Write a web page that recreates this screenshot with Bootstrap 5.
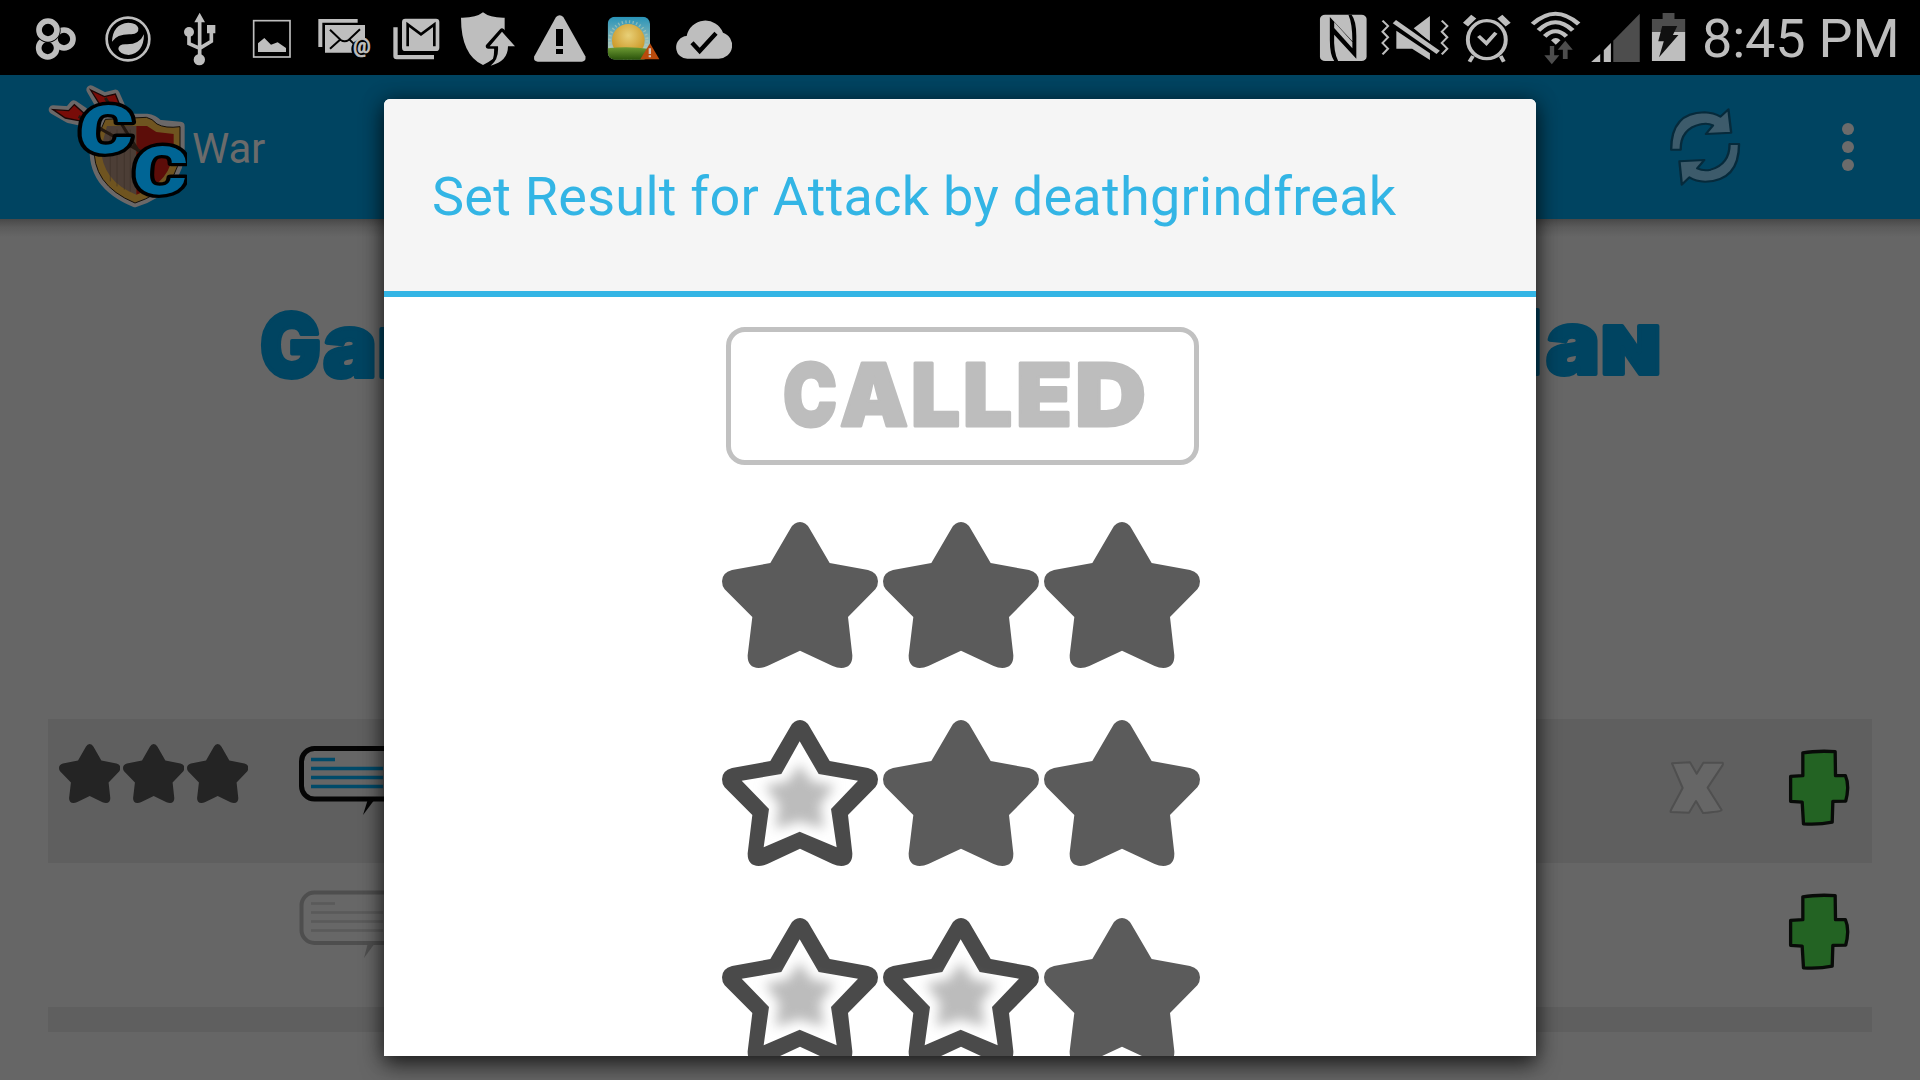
<!DOCTYPE html>
<html lang="en">
<head>
<meta charset="utf-8">
<meta name="viewport" content="width=device-width, initial-scale=1">
<title>War</title>
<link href="https://cdn.jsdelivr.net/npm/bootstrap@5.3.0/dist/css/bootstrap.min.css" rel="stylesheet">
<style>
  body { font-family: Roboto, "Noto Sans", sans-serif; background: #666; width: 1920px; height: 1080px; }
  svg { display: block; flex: none; }
  .status-bar { height: 75px; background: #000; color: #bebebe; z-index: 3; padding-left: 20px; }
  .status-icons svg { fill: #bebebe; }
  .clock { width: 229px; padding-left: 11px; font-size: 54px; line-height: 78px; white-space: nowrap; letter-spacing: -.2px; }
  .action-bar { height: 144px; background: #004461; color: #6b6b6b; padding-left: 47px; }
  .action-title { font-size: 42px; line-height: 48px; margin-left: 5px; padding-top: 3px; letter-spacing: -.2px; }
  .refresh-icon { margin-right: 99px; }
  .overflow-icon { margin-right: 66px; }
  .drop-line { height: 18px; background: linear-gradient(#484848, #5b5b5b 45%, #666); }
  .clan-title { padding: 64px 0 0 250px; height: 482px; }
  .clan-title svg, .called-btn svg { overflow: visible; }
  .display-face { font-family: Inter, "Open Sans", sans-serif; font-weight: 900; }
  .war-list { padding: 0 48px; }
  .war-row { height: 144px; }
  .war-row.shaded { background: #5f5f5f; }
  .war-row.cut { height: 25px; }
  .mini-stars { width: 251px; padding: 24.6px 0 0 10.7px; gap: 2.8px; fill: #242424; }
  .mini-stars svg { width: 61.4px; height: 59px; }
  .row-actions { padding: 28px 20px 0 0; gap: 61px; }
  .clear-icon { margin-top: 13px; }
  .result-dialog { left: 384px; top: 99px; width: 1152px; height: 957px; border-radius: 6px 6px 0 0; background: #fff; box-shadow: 0 9px 22px rgba(0,0,0,.62), 0 0 20px rgba(0,0,0,.35); z-index: 2; }
  .dialog-head { height: 198px; background: #f5f5f5; border-bottom: 6px solid #33b5e5; border-radius: 6px 6px 0 0; padding-left: 48px; }
  .dialog-head h1 { color: #33b5e5; font-size: 54px; font-weight: 400; line-height: 64px; padding-top: 4px; white-space: nowrap; letter-spacing: .26px; }
  .dialog-list { height: 759px; padding-top: 30px; }
  .called-btn { width: 473px; height: 138px; border: 5px solid #c1c1c1; border-radius: 19px; margin: 0 0 57px 5px; background: #fff; }
  .star-row { gap: 5px; margin: 0 0 52px 1px; fill: #5b5b5b; }
  .star-row svg { width: 156px; height: 146px; }
</style>
</head>
<body class="overflow-hidden position-relative">

<svg width="0" height="0" class="position-absolute">
  <defs>
    <filter id="soft" x="-40%" y="-40%" width="180%" height="180%"><feGaussianBlur stdDeviation="17"/></filter>
    <linearGradient id="sky" x1="0" y1="0" x2="0" y2="1"><stop offset="0" stop-color="#2893b8"/><stop offset=".7" stop-color="#a5c4bc"/></linearGradient>
    <radialGradient id="sun" cy=".35" r=".65"><stop offset="0" stop-color="#e8d078"/><stop offset="1" stop-color="#c9921f"/></radialGradient>
    <linearGradient id="grass" x1="0" y1="0" x2="0" y2="1"><stop offset="0" stop-color="#6d9a33"/><stop offset="1" stop-color="#28510a"/></linearGradient>
    <clipPath id="tile"><rect x="683" y="50" width="127" height="129" rx="22"/></clipPath>
    <path id="star-shape" d="M205 20Q216 0 234 0Q252 0 263 20L323 123L438 144Q468 152 468 178Q468 192 460 202L378 285L391 400Q392 437 358 438Q345 438 332 432L234 386L136 432Q123 438 110 438Q76 437 77 400L91 285L8 202Q0 192 0 178Q0 152 30 144L145 123Z"/>
  </defs>
  <symbol id="star" viewBox="0 0 468 438" preserveAspectRatio="none"><use href="#star-shape"/></symbol>
  <symbol id="star-won" viewBox="0 0 468 438" preserveAspectRatio="none">
    <use href="#star-shape" fill="#4a4a4a"/>
    <path fill="#fff" d="M233 64L290 162L408 182L327 267L344 382L233 335L125 382L141 267L59 182L178 162Z"/>
    <path fill="#bcbcbc" filter="url(#soft)" d="M233 132L268 184L338 198L294 255L306 326L233 304L160 326L172 255L128 198L198 184Z"/>
  </symbol>
  <symbol id="plus" viewBox="860 140 200 245">
    <path d="M911 156Q950 149 1009 152L1010 225L1040 225Q1047 240 1047 262Q1046 285 1041 302L1002 303L1000 366Q960 374 913 371L909 305L874 303L874 227L911 225Z" fill="#236323" stroke="#080b08" stroke-width="10" stroke-linejoin="round"/>
  </symbol>
</svg>

<header class="status-bar d-flex position-relative">
  <div class="status-icons d-flex">
    <svg width="72" height="75" viewBox="60 0 216 225"><g fill="none" stroke="#000" stroke-width="24"><circle cx="192" cy="117" r="27"/></g><g fill="none" stroke="#bebebe" stroke-width="17"><circle cx="192" cy="117" r="27"/><circle cx="143" cy="144" r="27"/><circle cx="144" cy="90" r="27" stroke="#000" stroke-width="22"/><circle cx="144" cy="90" r="27"/></g></svg>
    <svg width="72" height="75" viewBox="276 0 216 225"><circle cx="384" cy="117" r="64" fill="none" stroke="#bebebe" stroke-width="8"/><path d="M336 125Q338 72 385 68Q411 69 415 84Q417 101 394 103Q352 101 336 125ZM432 103Q431 160 386 165Q358 162 355 147Q355 133 376 133Q418 135 432 103Z"/></svg>
    <svg width="72" height="75" viewBox="492 0 216 225"><circle cx="598" cy="179" r="17"/><circle cx="567" cy="96" r="15"/><path d="M621 75h25v25h-25zM599 38l16 29h-32z"/><path d="M599 60V175M567 96v35l32 14M634 90v34l-35 21" fill="none" stroke="#bebebe" stroke-width="11"/></svg>
    <svg width="72" height="75" viewBox="708 0 216 225"><rect x="761" y="62" width="109" height="109" fill="none" stroke="#bebebe" stroke-width="5"/><path d="M774 156V130L793 114L813 134L833 127L858 144V156Z"/></svg>
    <svg width="72" height="75" viewBox="924 0 216 225"><path d="M955 57h118v11H967v73h-12zM975 75h120v83H975z"/><path d="M990 89L1022 120Q1034 128 1046 120L1080 88M990 146l30-27M1048 118l12 12" fill="none" stroke="#000" stroke-width="6"/><ellipse cx="1086" cy="147" rx="32" ry="31" fill="#000"/><text x="1086" y="160" text-anchor="middle" font-size="58" font-weight="700" fill="#bebebe" stroke="#bebebe" stroke-width="2">@</text></svg>
    <svg width="72" height="75" viewBox="0 0 216 225"><path d="M40 82h13v83h109v13H50q-10 0-10-10z"/><rect x="66" y="56" width="112" height="97" rx="10"/><path d="M83 139V73l40 30l40-30v66" fill="none" stroke="#000" stroke-width="8"/></svg>
    <svg width="72" height="75" viewBox="216 0 216 225"><path d="M309 37Q330 54 374 53V100Q375 165 309 195Q243 165 243 53Q288 54 309 37Z"/><path d="M366 92L409 139H388Q386 190 334 201Q352 180 349 139H324Z" stroke="#000" stroke-width="14" stroke-linejoin="round"/><path d="M366 95L405 139H384Q384 184 332 197Q357 178 354 139H329Z"/></svg>
    <svg width="72" height="75" viewBox="432 0 216 225"><path d="M528 51Q539 40 550 51L616 169Q620 184 606 185H473Q458 184 463 169Z"/><path fill="#000" d="M528 87h21v51h-21zM528 147h21v15h-21z"/></svg>
    <svg width="72" height="75" viewBox="648 0 216 225"><g clip-path="url(#tile)"><rect x="683" y="50" width="127" height="129" fill="url(#sky)"/><circle cx="745" cy="121" r="56" fill="none" stroke="#b9cdb5" stroke-width="9" stroke-dasharray="4 7" opacity=".6"/><circle cx="745" cy="121" r="49" fill="url(#sun)"/><path d="M683 145Q745 138 810 147V180H683Z" fill="url(#grass)"/></g><path fill="#b94a0c" d="M810 130L838 178H781Z"/><path fill="#cfc3bd" d="M806 145h7v17h-7zM806 166h7v6h-7z"/></svg>
    <svg width="72" height="75" viewBox="864 0 216 225"><path d="M925 176A34 34 0 0 1 920 108A57 57 0 0 1 1029 98A40 40 0 0 1 1016 176Z"/><path d="M936 128l23 25l49-53" fill="none" stroke="#000" stroke-width="13"/></svg>
  </div>
  <div class="status-icons d-flex ms-auto">
    <svg width="59.3" height="75" viewBox="40 0 150 225" preserveAspectRatio="none"><rect x="50" y="44" width="118" height="139" rx="13"/><path fill="#000" d="M75 51L132 124Q132 70 122 44H130Q142 62 142 108V176L86 104Q84 155 96 183H86Q75 165 75 120Z"/><path d="M86 66L132 126V145L86 84Z"/></svg>
    <svg width="81" height="75" viewBox="190 0 205 225" preserveAspectRatio="none"><g fill="none" stroke="#bebebe" stroke-width="5.500"><path d="M209 62l14 16l-14 17l14 17l-14 17l14 17l-14 17M359 62l14 16l-14 17l14 17l-14 17l14 17l-14 17"/></g><path d="M288 85L329 48V125ZM244 92v54h40l45 34v-20z"/><path d="M239 65L350 157" stroke="#000" stroke-width="25"/><path d="M239 65L350 157" stroke="#bebebe" stroke-width="13"/></svg>
    <svg width="65.2" height="75" viewBox="395 0 165 225" preserveAspectRatio="none"><ellipse cx="473" cy="119" rx="48" ry="57" fill="none" stroke="#bebebe" stroke-width="10"/><path d="M452 108l20 22l24-32M438 168l-9 17M508 168l8 17" fill="none" stroke="#bebebe" stroke-width="10"/><path d="M419 74L440 50M527 74L506 50" stroke="#bebebe" stroke-width="17"/></svg>
    <svg width="64.8" height="75" viewBox="560 0 164 225" preserveAspectRatio="none"><g fill="none" stroke="#bebebe" stroke-width="12"><path d="M589 72Q647 10 706 72M604 91Q647 42 691 91M620 109Q647 79 675 109"/></g><path d="M636 121Q648 107 660 121L648 134Z"/><path fill="#4d4d4d" d="M633 138h11v28h13l-19 27l-19-27h14zM672 122l19 27h-13v28h-12v-28h-13z"/></svg>
    <svg width="59.7" height="75" viewBox="724 0 151 225" preserveAspectRatio="none"><path d="M737 186L760 162V186ZM769 151L787 129V186H769Z"/><path fill="#4d4d4d" d="M793 122L860 41V186H793Z"/></svg>
    <svg width="45.5" height="75" viewBox="875 0 115 225" preserveAspectRatio="none"><path fill="#4d4d4d" d="M917 39h30v18h27v40H890V57h27z"/><path d="M890 96h84v87h-84z"/><path fill="#111" d="M916 78H954L943 105H957L908 172L920 124H906Z"/></svg>
  </div>
  <div class="clock">8:45 PM</div>
</header>

<nav class="action-bar d-flex align-items-center">
  <svg width="140" height="127" viewBox="140 248 420 381">
    <g fill="#6b6868" stroke="#6b6868" stroke-width="26" stroke-linejoin="round">
      <path d="M158 325L205 328L220 310L250 330L250 362L205 352ZM271 265L312 286L345 278L360 312L300 315ZM320 350L440 350Q460 352 475 368L540 374V440Q542 560 404 605Q270 550 282 430Z"/>
    </g>
    <path d="M315 354L438 348Q456 352 470 368Q495 382 539 376V440Q541 560 404 605Q272 550 282 430Z" fill="#6f5420" stroke="#15100a" stroke-width="3"/>
    <path d="M320 374H408V580Q305 540 302 440Z" fill="#4c3e36"/><path d="M408 374H440L468 392L520 398V440Q515 545 408 580Z" fill="#5c0d09"/>
    <path d="M330 390V540M350 385V555M372 385V565M390 385V570" stroke="#3c3029" stroke-width="2"/>
    <path d="M158 325L205 328L222 310L250 335L245 360L195 350ZM271 266L312 286L345 278L358 310L300 312Z" fill="#780c08" stroke="#1c0605" stroke-width="4"/>
    <path d="M235 345L420 450M315 290L415 450" stroke="#241911" stroke-width="9"/>
    <g font-family="Roboto" font-weight="900" font-size="200" stroke-linejoin="round">
      <g fill="#000" stroke="#000" stroke-width="20"><text transform="translate(231 456) skewX(-4)" textLength="164" lengthAdjust="spacingAndGlyphs" fill="#006595" stroke="#000" paint-order="stroke">C</text><text transform="translate(393 579) skewX(-4)" textLength="164" lengthAdjust="spacingAndGlyphs" fill="#006595" stroke="#000" paint-order="stroke">C</text></g>
    </g>
  </svg>
  <span class="action-title">War</span>
  <svg class="refresh-icon ms-auto" width="75" height="83" viewBox="930 320 190 249" preserveAspectRatio="none">
    <g fill="#3d5b6b" stroke="#062a3b" stroke-width="6" stroke-linejoin="round"><path d="M938 451Q938 340 1022 339Q1046 340 1063 352L1083 330L1090 400L1026 404L1044 378Q1030 370 1013 375Q962 388 962 451Z"/><path d="M1110 434Q1110 545 1024 547Q1000 546 984 534L965 556L959 486L1022 482L1004 507Q1020 516 1038 511Q1086 495 1086 434Z"/></g>
  </svg>
  <svg class="overflow-icon" width="12" height="50" viewBox="0 0 12 50" fill="#6b6b6b"><circle cx="6" cy="7" r="6"/><circle cx="6" cy="25" r="6"/><circle cx="6" cy="43" r="6"/></svg>
</nav>
<div class="drop-line"></div>

<main>
  <div class="clan-title d-flex">
    <svg width="1420" height="100" viewBox="250 300 1420 100" class="display-face" fill="#004461" stroke="#004461" stroke-width="4" stroke-linejoin="round" font-size="88">
      <text y="376"><tspan x="260" textLength="61" lengthAdjust="spacingAndGlyphs">G</tspan><tspan x="323" textLength="54" lengthAdjust="spacingAndGlyphs">a</tspan><tspan x="377">r</tspan></text>
      <text y="373"><tspan x="1516">l</tspan><tspan x="1546" textLength="54" lengthAdjust="spacingAndGlyphs">a</tspan><tspan x="1600" textLength="62" lengthAdjust="spacingAndGlyphs" font-variant="small-caps">n</tspan></text>
    </svg>
  </div>

  <div class="war-list">
    <div class="war-row shaded d-flex">
      <div class="mini-stars d-flex"><svg><use href="#star"/></svg><svg><use href="#star"/></svg><svg><use href="#star"/></svg></div>
      <svg width="130" height="100" viewBox="299 719 130 100"><rect x="301.500" y="748.500" width="125" height="50.500" rx="13" fill="#666" stroke="#050505" stroke-width="5"/><path d="M368 799L363 815L375 799Z" fill="#050505"/><path d="M311 759.500h24M311 768.500h72M311 777.500h72M311 786.500h72" stroke="#004a69" stroke-width="3.500"/></svg>
      <div class="row-actions d-flex ms-auto">
        <svg class="clear-icon" width="56" height="56" viewBox="508 180 168 168"><path d="M517 190L571 187L591 221L611 188L669 188Q671 192 668 197L624 263L666 330Q665 335 610 339L589 303L568 338L513 336Q512 332 515 328L549 264Z" fill="#666" stroke="#4f4f4f" stroke-width="6" stroke-linejoin="round"/></svg>
        <svg width="66" height="82"><use href="#plus"/></svg>
      </div>
    </div>
    <div class="war-row d-flex">
      <div class="mini-stars d-flex"></div>
      <svg width="130" height="100" viewBox="299 719 130 100"><rect x="301.500" y="748.500" width="125" height="50.500" rx="13" fill="#676767" stroke="#4e4e4e" stroke-width="4"/><path d="M368 799L364 814L375 799Z" fill="#4e4e4e"/><path d="M311 759.500h24M311 768.500h72M311 777.500h72M311 786.500h72" stroke="#5a5a5a" stroke-width="2.500"/></svg>
      <div class="row-actions d-flex ms-auto"><svg width="66" height="82"><use href="#plus"/></svg></div>
    </div>
    <div class="war-row shaded cut"></div>
  </div>
</main>

<section class="result-dialog position-absolute overflow-visible" role="dialog" aria-label="Set result">
  <div class="dialog-head d-flex align-items-center"><h1 class="mb-0">Set Result for Attack by deathgrindfreak</h1></div>
  <div class="dialog-list d-flex flex-column align-items-center overflow-hidden">
    <div class="called-btn flex-shrink-0">
      <svg width="463" height="128" viewBox="731 332 463 128" class="display-face" fill="#bdbdbd" stroke="#bdbdbd" stroke-width="3" stroke-linejoin="round" font-size="87">
        <text y="426"><tspan x="783" textLength="54" lengthAdjust="spacingAndGlyphs">C</tspan><tspan x="840" textLength="68" lengthAdjust="spacingAndGlyphs">A</tspan><tspan x="911" textLength="49" lengthAdjust="spacingAndGlyphs">L</tspan><tspan x="963" textLength="49" lengthAdjust="spacingAndGlyphs">L</tspan><tspan x="1016" textLength="56" lengthAdjust="spacingAndGlyphs">E</tspan><tspan x="1075" textLength="71" lengthAdjust="spacingAndGlyphs">D</tspan></text>
      </svg>
    </div>
    <div class="star-row d-flex flex-shrink-0"><svg><use href="#star"/></svg><svg><use href="#star"/></svg><svg><use href="#star"/></svg></div>
    <div class="star-row d-flex flex-shrink-0"><svg><use href="#star-won"/></svg><svg><use href="#star"/></svg><svg><use href="#star"/></svg></div>
    <div class="star-row d-flex flex-shrink-0"><svg><use href="#star-won"/></svg><svg><use href="#star-won"/></svg><svg><use href="#star"/></svg></div>
  </div>
</section>

<script src="https://cdn.jsdelivr.net/npm/bootstrap@5.3.0/dist/js/bootstrap.bundle.min.js"></script>
</body>
</html>
